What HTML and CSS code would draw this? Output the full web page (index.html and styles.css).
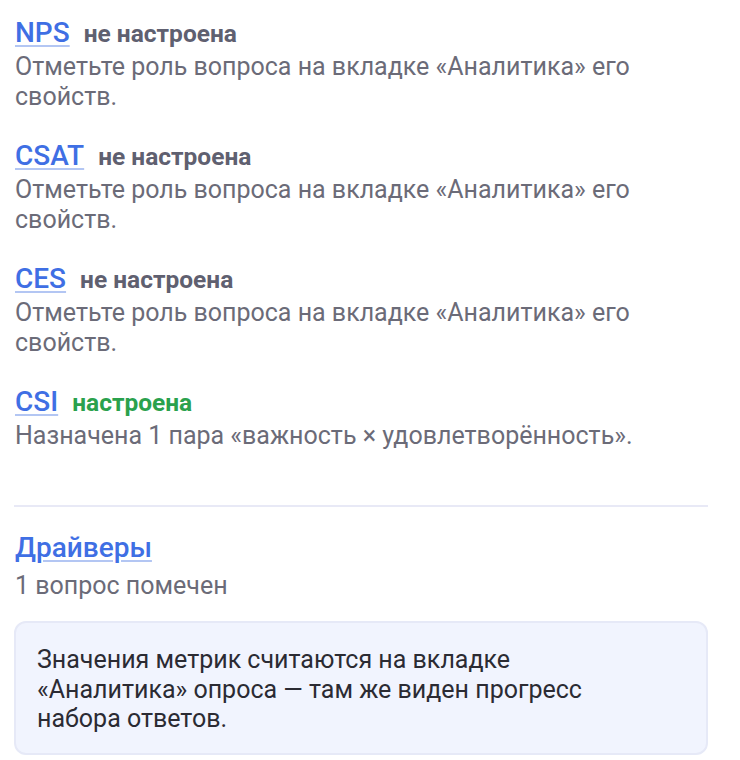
FILE: index.html
```html
<!DOCTYPE html>
<html lang="ru">
<head>
    <meta charset="UTF-8">
    <meta name="viewport" content="width=device-width, initial-scale=1.0">
    <title>Метрики</title>
    <link rel="stylesheet" href="styles.css">
</head>
<body>

<div class="panel">
    <div class="metric">
        <div class="metric-head">
            <a class="metric-name" href="#">NPS</a>
            <span class="status">не настроена</span>
        </div>
        <div class="metric-desc">Отметьте роль вопроса на вкладке «Аналитика» его свойств.</div>
    </div>

    <div class="metric">
        <div class="metric-head">
            <a class="metric-name" href="#">CSAT</a>
            <span class="status">не настроена</span>
        </div>
        <div class="metric-desc">Отметьте роль вопроса на вкладке «Аналитика» его свойств.</div>
    </div>

    <div class="metric">
        <div class="metric-head">
            <a class="metric-name" href="#">CES</a>
            <span class="status">не настроена</span>
        </div>
        <div class="metric-desc">Отметьте роль вопроса на вкладке «Аналитика» его свойств.</div>
    </div>

    <div class="metric">
        <div class="metric-head">
            <a class="metric-name" href="#">CSI</a>
            <span class="status ok">настроена</span>
        </div>
        <div class="metric-desc">Назначена 1 пара «важность × удовлетворённость».</div>
    </div>

    <hr class="divider">

    <div class="metric drivers">
        <div class="metric-head">
            <a class="metric-name" href="#">Драйверы</a>
        </div>
        <div class="metric-desc">1 вопрос помечен</div>
    </div>

    <div class="note">
        <p>Значения метрик считаются на вкладке «Аналитика» опроса — там же виден прогресс набора ответов.</p>
    </div>
</div>

</body>
</html>
```

FILE: styles.css
```css
body {
    font-family: Roboto, "Noto Sans", sans-serif;
    background-color: #ffffff;
    color: #2b2b33;
    margin: 0;
}

.panel {
    width: 694px;
    padding: 16px 0 0 14px;
}

.metric {
    padding-left: 1px;
    margin-bottom: 28px;
}

.metric-head {
    display: flex;
    align-items: baseline;
    gap: 14px;
}

.metric-name {
    color: #3f6fe4;
    font-size: 28px;
    font-weight: 500;
    line-height: 34px;
    text-decoration: underline;
    text-decoration-color: #b3c6f3;
    text-decoration-thickness: 2px;
    text-underline-offset: 3px;
}

.status {
    color: #5f6070;
    font-size: 24.5px;
    font-weight: 700;
}

.status.ok {
    color: #2aa14d;
}

.metric-desc {
    color: #6b6b78;
    font-size: 25px;
    line-height: 29.5px;
    margin-top: 2px;
}

.drivers .metric-desc {
    margin-top: 6px;
}

.divider {
    border: none;
    height: 2px;
    background-color: #e8e9f6;
    margin: 54px 0 24px 0;
}

.note {
    margin-top: -7px;
    padding: 22px 22px 19px 21px;
    background-color: #f1f4fe;
    border: 2px solid #e6e9f7;
    border-radius: 12px;
}

.note p {
    margin: 0;
    max-width: 600px;
    font-size: 25px;
    line-height: 29.5px;
    color: #2b2b33;
}
```
